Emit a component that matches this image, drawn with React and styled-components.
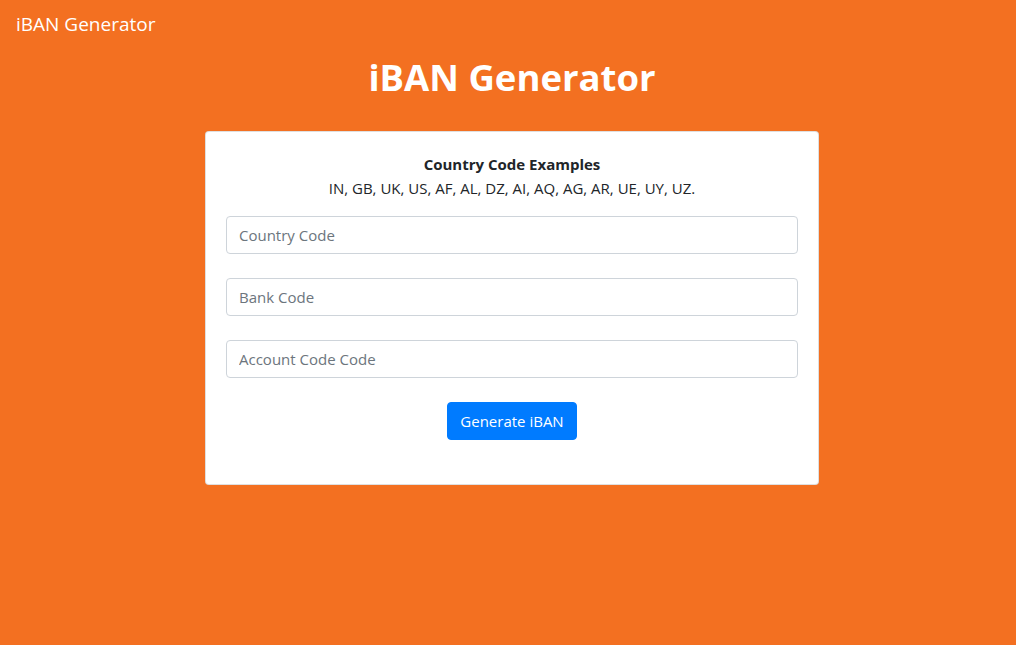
import React from "react";
import styled, { createGlobalStyle } from "styled-components";

const Global = createGlobalStyle`
  html, body { margin: 0; padding: 0; }
  body {
    background: #f37021;
    font-family: "Segoe UI", "Open Sans", "Noto Sans", sans-serif;
    color: #212529;
    font-size: 15px;
    line-height: 24px;
    min-height: 645px;
  }
  * { box-sizing: border-box; }
`;

const Nav = styled.nav`
  display: flex;
  align-items: center;
  height: 48px;
  padding: 0 16px;
`;

const Brand = styled.a`
  color: #fff;
  font-size: 19px;
  line-height: 30px;
  text-decoration: none;
`;

const Main = styled.main`
  display: flex;
  flex-direction: column;
  align-items: center;
  padding-left: 8px;
`;

const Title = styled.h1`
  margin: 5px 0 30px;
  color: #fff;
  font-size: 36.5px;
  font-weight: 700;
  line-height: 48px;
`;

const Card = styled.div`
  width: 614px;
  background: #fff;
  border: 1px solid rgba(0, 0, 0, 0.125);
  border-radius: 4px;
  padding: 20px;
`;

const Examples = styled.div`
  text-align: center;
  margin-bottom: 16px;
`;

const ExTitle = styled.div`
  font-weight: 700;
`;

const Form = styled.form`
  display: flex;
  flex-direction: column;
  gap: 24px;
  margin-bottom: 24px;
`;

const Input = styled.input`
  display: block;
  width: 100%;
  height: 38px;
  padding: 6px 12px;
  font: inherit;
  color: #495057;
  border: 1px solid #ced4da;
  border-radius: 4px;
  outline: none;
  &::placeholder { color: #6c757d; opacity: 1; }
`;

const Button = styled.button`
  align-self: center;
  height: 38px;
  padding: 6px 12px;
  font: inherit;
  color: #fff;
  background: #007bff;
  border: 1px solid #007bff;
  border-radius: 4px;
  cursor: pointer;
`;

export default function App() {
  return (
    <>
      <Global />
      <Nav>
        <Brand href="#">iBAN Generator</Brand>
      </Nav>
      <Main>
        <Title>iBAN Generator</Title>
        <Card>
          <Examples>
            <ExTitle>Country Code Examples</ExTitle>
            <div>IN, GB, UK, US, AF, AL, DZ, AI, AQ, AG, AR, UE, UY, UZ.</div>
          </Examples>
          <Form onSubmit={(e) => e.preventDefault()}>
            <Input placeholder="Country Code" />
            <Input placeholder="Bank Code" />
            <Input placeholder="Account Code Code" />
            <Button type="submit">Generate iBAN</Button>
          </Form>
        </Card>
      </Main>
    </>
  );
}
